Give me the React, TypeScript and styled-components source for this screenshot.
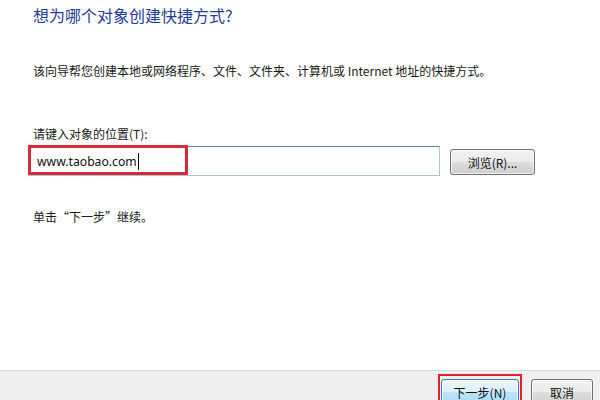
import React from "react";
import styled, { createGlobalStyle } from "styled-components";

const Global = createGlobalStyle`
  html, body { margin: 0; padding: 0; background: #fff; }
  body { font-family: "Noto Sans CJK SC", "Noto Sans", sans-serif; }
`;

const Page = styled.div`
  width: 600px;
  height: 400px;
  display: flex;
  flex-direction: column;
  overflow: hidden;
  background: #fff;
`;

const Content = styled.div`
  flex: 1;
  padding: 0 0 0 33px;
  display: flex;
  flex-direction: column;
`;

const Title = styled.div`
  color: #1f3d94;
  font-size: 16px;
  line-height: 20px;
  margin-top: 5px;
`;

const Text = styled.div<{ $top: number }>`
  color: #1a1a1a;
  font-size: 12px;
  line-height: 16px;
  margin-top: ${(p) => p.$top}px;
`;

const Row = styled.div`
  display: flex;
  align-items: flex-start;
  margin-top: 4px;
  margin-left: -5px;
  position: relative;
`;

const Input = styled.div`
  box-sizing: border-box;
  width: 412px;
  height: 30px;
  border: 1px solid #abc4d8;
  border-top-color: #5b84a6;
  padding-left: 8px;
  display: flex;
  align-items: center;
  font-size: 12.2px;
  color: #111;
  font-family: "Noto Sans", "Noto Sans CJK SC", sans-serif;
`;

const Caret = styled.span`
  display: inline-block;
  width: 1px;
  height: 17px;
  background: #000;
  margin-left: 1px;
`;

const Highlight = styled.div`
  position: absolute;
  left: 0;
  top: -1px;
  width: 160px;
  height: 30px;
  box-sizing: border-box;
  border: 3px solid #d32a3c;
  pointer-events: none;
`;

const Button = styled.div<{ $focus?: boolean; $w: number }>`
  box-sizing: border-box;
  width: ${(p) => p.$w}px;
  height: 26px;
  border: 1px solid ${(p) => (p.$focus ? "#3c7fb1" : "#707070")};
  border-radius: 3px;
  background: ${(p) =>
    p.$focus
      ? "linear-gradient(#eaf6fd 0%, #d9f0fc 50%, #bee6fd 51%, #a7d9f5 100%)"
      : "linear-gradient(#f2f2f2 0%, #ebebeb 50%, #dddddd 51%, #cfcfcf 100%)"};
  display: flex;
  align-items: center;
  justify-content: center;
  font-size: 12px;
  color: #111;
  box-shadow: inset 0 0 0 1px rgba(255, 255, 255, 0.7);
`;

const BrowseWrap = styled.div`
  margin-left: 10px;
  margin-top: 3px;
`;

const Footer = styled.div`
  height: 29px;
  border-top: 1px solid #dcdcdc;
  background: #efefef;
  display: flex;
  justify-content: flex-end;
  align-items: flex-start;
  padding-right: 7px;
  gap: 12px;
`;

const FooterBtn = styled.div`
  margin-top: 8px;
  position: relative;
`;

const NextMark = styled.div`
  position: absolute;
  left: -3px;
  top: -5px;
  width: 84px;
  height: 30px;
  box-sizing: border-box;
  border: 2px solid #e0202e;
  pointer-events: none;
`;

export default function App() {
  return (
    <Page>
      <Global />
      <Content>
        <Title>想为哪个对象创建快捷方式?</Title>
        <Text $top={38}>该向导帮您创建本地或网络程序、文件、文件夹、计算机或 Internet 地址的快捷方式。</Text>
        <Text $top={47}>请键入对象的位置(T):</Text>
        <Row>
          <Input>
            www.taobao.com<Caret />
          </Input>
          <Highlight />
          <BrowseWrap>
            <Button $w={85}>浏览(R)...</Button>
          </BrowseWrap>
        </Row>
        <Text $top={33}>单击“下一步”继续。</Text>
      </Content>
      <Footer>
        <FooterBtn>
          <Button $focus $w={78}>下一步(N)</Button>
          <NextMark />
        </FooterBtn>
        <FooterBtn>
          <Button $w={62}>取消</Button>
        </FooterBtn>
      </Footer>
    </Page>
  );
}
